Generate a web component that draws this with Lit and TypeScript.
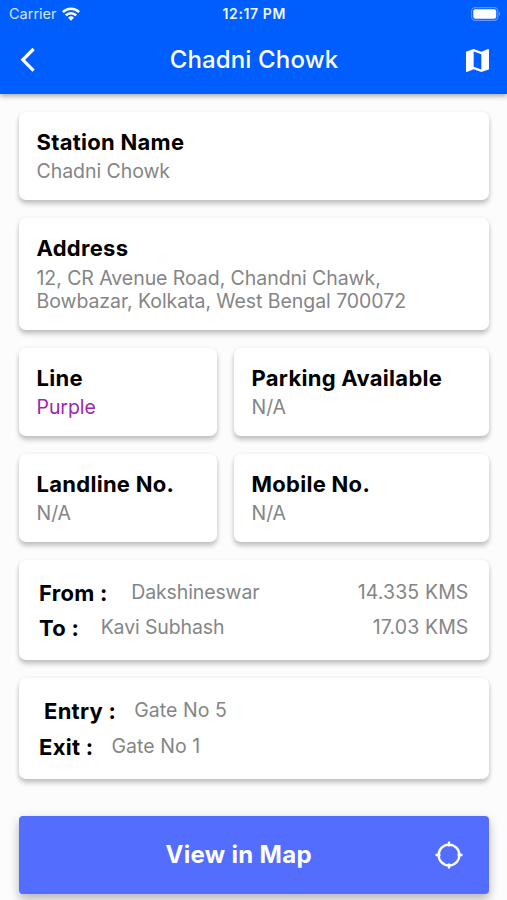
import { LitElement, html, css, nothing } from "lit";
import { customElement, property } from "lit/decorators.js";

@customElement("status-bar")
class StatusBar extends LitElement {
  static styles = css`
    :host {
      display: grid;
      grid-template-columns: 1fr auto 1fr;
      align-items: center;
      height: 27px;
      padding: 0 6.5px 0 9px;
    }
    .carrier {
      display: flex;
      align-items: center;
      gap: 5.5px;
      font-size: 14.5px;
      color: #d5e4ff;
    }
    .time {
      margin-right: 1px;
      font-size: 14px;
      font-weight: 600;
      letter-spacing: 0.6px;
      color: #f0f6ff;
    }
    .battery {
      justify-self: end;
    }
    svg {
      display: block;
    }
  `;
  render() {
    return html`
      <div class="carrier">
        <span>Carrier</span>
        <svg width="18" height="14" viewBox="0 0 18 14" fill="none" stroke="#fff" stroke-width="2.5">
          <path d="M0.9 5.2a11.5 11.5 0 0 1 16.2 0" />
          <path d="M3.8 8.4a7.3 7.3 0 0 1 10.4 0" />
          <path d="M6 10.8a4.3 4.3 0 0 1 6 0L9 13.8z" fill="#fff" stroke="none" />
        </svg>
      </div>
      <div class="time">12:17 PM</div>
      <svg class="battery" width="30" height="14" viewBox="0 0 30 14">
        <rect x="0.6" y="0.6" width="26.3" height="12.8" rx="3.6" fill="none" stroke="#5f9aff" stroke-width="1.1" />
        <rect x="2.3" y="2.3" width="22.9" height="9.4" rx="2" fill="#fff" />
        <path d="M28 4.8a2.6 2.6 0 0 1 0 4.4z" fill="#5f9aff" />
      </svg>
    `;
  }
}

@customElement("info-card")
class InfoCard extends LitElement {
  @property() label = "";
  @property() value = "";
  @property() tone = "";
  static styles = css`
    :host {
      display: block;
      box-sizing: border-box;
      padding: 17px 17.5px 16px;
      background: #fff;
      border-radius: 7px;
      box-shadow: 0 4px 5px rgba(0, 0, 0, 0.2), 0 1px 5px rgba(0, 0, 0, 0.09);
    }
    .label {
      font-size: 22px;
      line-height: 26px;
      font-weight: 650;
      letter-spacing: 0.28px;
      color: #000;
      white-space: nowrap;
    }
    .value {
      margin-top: 5px;
      font-size: 19.5px;
      line-height: 23px;
      letter-spacing: -0.06px;
      color: #858585;
      white-space: pre-line;
    }
    .purple {
      color: #9c27b0;
    }
    .multiline {
      margin-top: 6px;
    }
  `;
  render() {
    return html`
      <div class="label">${this.label}</div>
      <div class="value ${this.tone}">${this.value}</div>
    `;
  }
}

interface Row {
  label: string;
  value: string;
  distance?: string;
  kind: string;
}

@customElement("pair-card")
class PairCard extends LitElement {
  @property({ attribute: false }) rows: Row[] = [];
  static styles = css`
    :host {
      display: flex;
      flex-direction: column;
      box-sizing: border-box;
      height: 100.5px;
      padding: 14px 20px 0;
      background: #fff;
      border-radius: 7px;
      box-shadow: 0 4px 5px rgba(0, 0, 0, 0.2), 0 1px 5px rgba(0, 0, 0, 0.09);
    }
    .row {
      display: flex;
      align-items: center;
      height: 35.5px;
      white-space: nowrap;
    }
    .label {
      padding-top: 3px;
      font-size: 22px;
      font-weight: 650;
      letter-spacing: 0.28px;
      color: #000;
    }
    .value,
    .distance {
      padding-top: 1px;
      font-size: 19.5px;
      letter-spacing: -0.12px;
      color: #858585;
    }
    .value {
      margin-left: 22px;
    }
    .from .value {
      margin-left: 23.5px;
    }
    .to .value {
      margin-left: 21.5px;
    }
    .distance {
      margin-left: auto;
      letter-spacing: 0.12px;
    }
    .entry {
      padding-left: 5px;
    }
    .entry .value,
    .exit .value {
      margin-left: 18px;
      letter-spacing: 0.05px;
    }
  `;
  render() {
    return this.rows.map(
      (r) => html`
        <div class="row ${r.kind}">
          <span class="label">${r.label}</span>
          <span class="value">${r.value}</span>
          ${r.distance ? html`<span class="distance">${r.distance}</span>` : nothing}
        </div>
      `
    );
  }
}

@customElement("app-root")
class AppRoot extends LitElement {
  static styles = css`
    :host {
      display: flex;
      flex-direction: column;
      box-sizing: border-box;
      height: 900px;
      overflow: hidden;
      background: #fcfcfc;
      font-family: Inter, "Liberation Sans", sans-serif;
      color: #fff;
    }
    header {
      flex: none;
      height: 94px;
      background: #005eff;
      box-shadow: 0 2px 5px rgba(0, 0, 0, 0.35);
    }
    .nav {
      display: grid;
      grid-template-columns: 1fr auto 1fr;
      align-items: center;
      height: 66px;
      padding: 0 18px 0 19px;
    }
    .title {
      padding-bottom: 2px;
      font-size: 24px;
      font-weight: 500;
      letter-spacing: 0.15px;
    }
    .map {
      justify-self: end;
    }
    svg {
      display: block;
    }
    main {
      display: flex;
      flex-direction: column;
      gap: 18px;
      padding: 18px 18.5px 0 19px;
    }
    .station {
      height: 88px;
    }
    .address {
      height: 111.5px;
    }
    .pair {
      display: grid;
      grid-template-columns: 198px 1fr;
      gap: 17px;
      height: 88px;
    }
    .button {
      display: grid;
      grid-template-columns: 1fr auto 1fr;
      align-items: center;
      height: 78px;
      margin-top: 19px;
      border-radius: 4px;
      background: #536dfe;
      box-shadow: 0 6px 8px rgba(0, 0, 0, 0.2), 0 2px 14px rgba(0, 0, 0, 0.1);
      font-size: 24px;
      font-weight: 650;
      letter-spacing: 0.3px;
    }
    .caption {
      grid-column: 2;
      margin-right: 30px;
    }
    .target {
      justify-self: end;
      margin-right: 25.5px;
    }
  `;
  render() {
    return html`
      <header>
        <status-bar></status-bar>
        <div class="nav">
          <svg width="16" height="26" viewBox="0 0 16 26" fill="none" stroke="#fff" stroke-width="3.2">
            <path d="M14.6 2L3.8 12.8 14.6 23.6" />
          </svg>
          <div class="title">Chadni Chowk</div>
          <svg class="map" width="23" height="23" viewBox="3 3 18 18" fill="#fff">
            <path
              d="M20.5 3l-.16.03L15 5.1 9 3 3.36 4.9c-.21.07-.36.25-.36.48V20.5c0 .28.22.5.5.5l.16-.03L9 18.9l6 2.1 5.64-1.9c.21-.07.36-.25.36-.48V3.5c0-.28-.22-.5-.5-.5zM15 19l-6-2.11V5l6 2.11V19z"
            />
          </svg>
        </div>
      </header>
      <main>
        <info-card class="station" label="Station Name" value="Chadni Chowk"></info-card>
        <info-card
          class="address"
          label="Address"
          tone="multiline"
          .value=${"12, CR Avenue Road, Chandni Chawk,\nBowbazar, Kolkata, West Bengal 700072"}
        ></info-card>
        <div class="pair">
          <info-card label="Line" value="Purple" tone="purple"></info-card>
          <info-card label="Parking Available" value="N/A"></info-card>
        </div>
        <div class="pair">
          <info-card label="Landline No." value="N/A"></info-card>
          <info-card label="Mobile No." value="N/A"></info-card>
        </div>
        <pair-card
          .rows=${[
            { label: "From :", value: "Dakshineswar", distance: "14.335 KMS", kind: "from" },
            { label: "To :", value: "Kavi Subhash", distance: "17.03 KMS", kind: "to" },
          ]}
        ></pair-card>
        <pair-card
          .rows=${[
            { label: "Entry :", value: "Gate No 5", kind: "entry" },
            { label: "Exit :", value: "Gate No 1", kind: "exit" },
          ]}
        ></pair-card>
        <div class="button">
          <span class="caption">View in Map</span>
          <svg class="target" width="28" height="28" viewBox="0 0 28 28" fill="none" stroke="#fff" stroke-width="2.3">
            <circle cx="14" cy="14" r="10.4" />
            <path d="M14 0.5v5M14 22.5v5M0.5 14h5M22.5 14h5" />
          </svg>
        </div>
      </main>
    `;
  }
}
